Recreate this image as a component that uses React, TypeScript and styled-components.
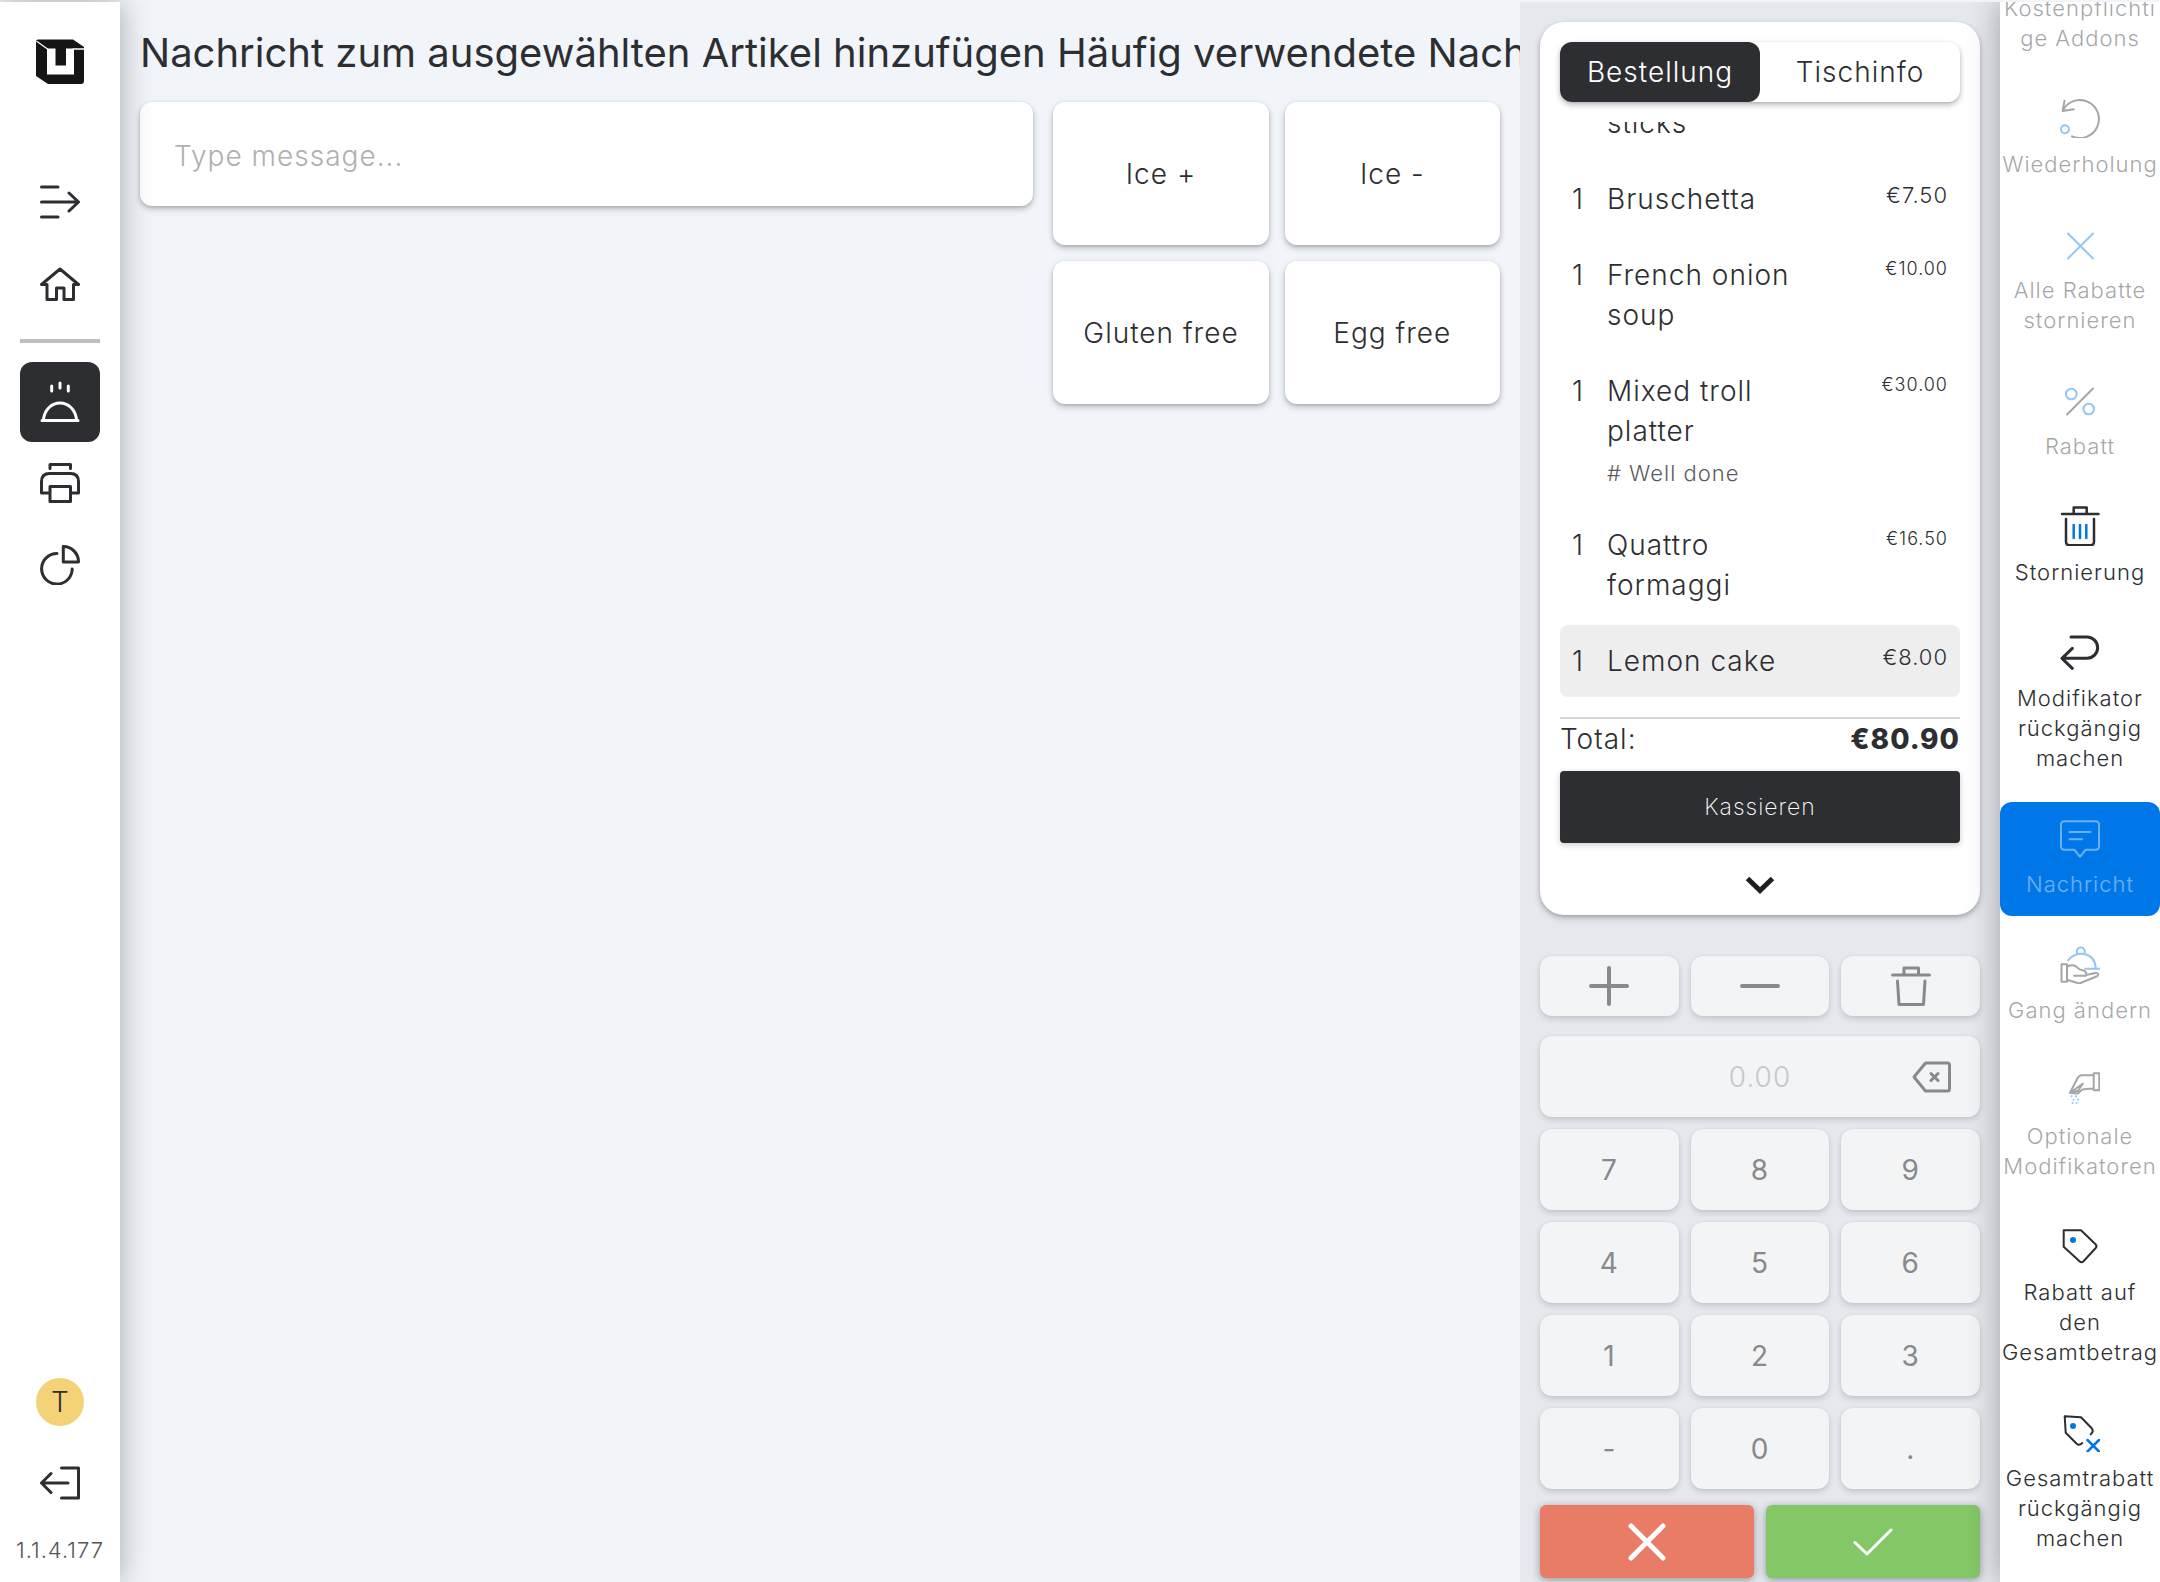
import React from "react";
import styled, { createGlobalStyle, css } from "styled-components";

const ink = "#2d2e32";
const blue = "#0077e8";
const lift = "0 3px 6px rgba(0, 0, 0, 0.24), 0 1px 3px rgba(0, 0, 0, 0.12)";
const edge = "0 0 30px rgba(0, 0, 0, 0.32)";

const GlobalStyle = createGlobalStyle`
  *, *::before, *::after { box-sizing: border-box; }
  body {
    margin: 0;
    background: #f1f5fa;
    color: ${ink};
    font-family: Inter, "Liberation Sans", sans-serif;
    font-size: 28px;
    font-weight: 300;
    letter-spacing: 1px;
    line-height: 40px;
  }
  button, input {
    font: inherit;
    color: inherit;
    letter-spacing: inherit;
    border: 0;
    margin: 0;
    padding: 0;
    background: none;
  }
  button { cursor: pointer; }
  h1, p, ul { margin: 0; padding: 0; }
  svg { display: block; flex: none; fill: none; stroke: currentColor; stroke-linecap: round; stroke-linejoin: round; }
`;

const Screen = styled.div`
  display: grid;
  grid-template-columns: 120px minmax(0, 1fr) 480px 160px;
  height: 100vh;
  padding-top: 2px;
  overflow: hidden;
`;

/* ---------- left navigation ---------- */

const Sidebar = styled.nav`
  z-index: 2;
  display: flex;
  flex-direction: column;
  align-items: center;
  padding: 37px 20px 16px;
  background: #fff;
  box-shadow: ${edge};
`;

const Brand = styled.div`
  margin-bottom: 76px;
`;

const NavButton = styled.button<{ $active?: boolean }>`
  display: flex;
  align-items: center;
  justify-content: center;
  width: 80px;
  height: ${(p) => (p.$active ? 80 : 82)}px;
  border-radius: 12px;
  color: ${(p) => (p.$active ? "#fff" : ink)};
  background: ${(p) => (p.$active ? ink : "transparent")};
`;

const NavDivider = styled.hr`
  width: 100%;
  height: 4px;
  margin: 14px 0 19px;
  border: 0;
  background: #bfbfbf;
`;

const NavFoot = styled.div`
  display: flex;
  flex-direction: column;
  align-items: center;
  margin-top: auto;
`;

const Avatar = styled.span`
  display: flex;
  align-items: center;
  justify-content: center;
  width: 48px;
  height: 48px;
  margin-bottom: 16px;
  border-radius: 50%;
  background: #f4d277;
  letter-spacing: 0;
`;

const Version = styled.span`
  margin-top: 10px;
  color: #555;
  font-size: 22px;
  line-height: 32px;
`;

/* ---------- message area ---------- */

const Main = styled.main`
  min-width: 0;
  padding: 27px 0 0 20px;
  overflow: hidden;
`;

const Title = styled.h1`
  overflow: hidden;
  font-size: 40px;
  font-weight: 400;
  line-height: 48px;
  letter-spacing: 0;
  white-space: nowrap;
`;

const MessageGrid = styled.div`
  display: grid;
  grid-template-columns: 2fr 1fr;
  align-items: start;
  gap: 20px;
  padding: 25px 20px 0 0;
`;

const MessageInput = styled.input`
  width: 100%;
  height: 104px;
  padding: 4px 34px 0;
  border-radius: 12px;
  background: #fff;
  box-shadow: ${lift};
  outline: 0;
  &::placeholder { color: #b0b0b0; opacity: 1; }
`;

const QuickGrid = styled.div`
  display: grid;
  grid-template-columns: 1fr 1fr;
  gap: 16px;
`;

const QuickButton = styled.button`
  height: 143px;
  border-radius: 12px;
  background: #fff;
  box-shadow: ${lift};
`;

/* ---------- order column ---------- */

const OrderColumn = styled.section`
  display: flex;
  flex-direction: column;
  min-height: 0;
  padding: 20px 20px 4px;
  background: #e5e8ed;
`;

const OrderCard = styled.div`
  display: flex;
  flex: 1;
  flex-direction: column;
  min-height: 0;
  margin-bottom: 41px;
  padding: 20px 20px 0;
  border-radius: 24px;
  background: #fff;
  box-shadow: ${lift};
`;

const Tabs = styled.div`
  display: grid;
  grid-template-columns: 1fr 1fr;
  flex: none;
  height: 60px;
  margin-bottom: 20px;
  border-radius: 12px;
  background: #fff;
  box-shadow: ${lift};
`;

const Tab = styled.button<{ $active?: boolean }>`
  border-radius: 12px;
  color: ${(p) => (p.$active ? "#fff" : ink)};
  background: ${(p) => (p.$active ? ink : "transparent")};
`;

const OrderList = styled.ul`
  display: flex;
  flex: 1;
  flex-direction: column;
  justify-content: flex-end;
  gap: 4px;
  min-height: 0;
  margin-bottom: 20px;
  overflow: hidden;
  list-style: none;
`;

const OrderRow = styled.li<{ $selected?: boolean }>`
  display: grid;
  grid-template-columns: 35px 200px 1fr;
  flex: none;
  padding: 16px 12px;
  border-radius: 8px;
  background: ${(p) => (p.$selected ? "#eeeeee" : "transparent")};
`;

const ItemName = styled.span`
  grid-column: 2;
`;

const Price = styled.span<{ $small?: boolean }>`
  padding-top: 3px;
  font-size: ${(p) => (p.$small ? 18 : 22)}px;
  line-height: ${(p) => (p.$small ? 22 : 26)}px;
  text-align: right;
`;

const Note = styled.span`
  grid-column: 2 / -1;
  margin-top: 6px;
  color: #5c5c5e;
  font-size: 22px;
  line-height: 32px;
`;

const TotalRow = styled.p`
  display: flex;
  justify-content: space-between;
  margin-bottom: 12px;
  border-top: 2px solid #d8d8d8;
  strong { font-weight: 800; }
`;

const PayButton = styled.button`
  flex: none;
  height: 72px;
  border-radius: 4px;
  color: #fff;
  background: ${ink};
  box-shadow: 0 2px 6px rgba(0, 0, 0, 0.2);
  font-size: 23px;
  font-weight: 200;
`;

const CollapseButton = styled.button`
  display: flex;
  flex: none;
  align-items: center;
  justify-content: center;
  height: 84px;
  margin-bottom: -12px;
`;

/* ---------- keypad ---------- */

const softKey = css`
  display: flex;
  align-items: center;
  justify-content: center;
  border-radius: 12px;
  color: #88898b;
  background: #f2f4f6;
  box-shadow: 0 3px 6px rgba(0, 0, 0, 0.14), 0 0 3px rgba(0, 0, 0, 0.06);
`;

const KeyGrid = styled.div`
  display: grid;
  grid-template-columns: repeat(3, 1fr);
  gap: 12px;
`;

const ToolKey = styled.button`
  ${softKey}
  height: 60px;
`;

const DigitKey = styled.button`
  ${softKey}
  height: 81px;
  font-weight: 400;
`;

const AmountBox = styled.div`
  ${softKey}
  display: grid;
  grid-template-columns: 68px 1fr 68px;
  height: 81px;
  margin: 20px 0 12px;
`;

const AmountInput = styled.input`
  grid-column: 2;
  width: 100%;
  text-align: center;
  &::placeholder { color: #c6c8cb; opacity: 1; }
`;

const ConfirmRow = styled.div`
  display: grid;
  grid-template-columns: 1fr 1fr;
  gap: 12px;
  margin-top: 16px;
`;

const ConfirmButton = styled.button<{ $tone: string }>`
  display: flex;
  align-items: center;
  justify-content: center;
  height: 73px;
  border-radius: 6px;
  color: #fff;
  background: ${(p) => p.$tone};
  box-shadow: 0 2px 8px rgba(0, 0, 0, 0.36);
`;

/* ---------- action rail ---------- */

const Rail = styled.aside`
  z-index: 1;
  display: flex;
  flex-direction: column;
  justify-content: flex-end;
  gap: 12px;
  min-height: 0;
  padding-bottom: 12px;
  background: #fff;
  box-shadow: ${edge};
  clip-path: inset(0 0 0 -40px);
`;

const RailButton = styled.button<{ $state?: "off" | "active" }>`
  display: flex;
  flex: none;
  flex-direction: column;
  align-items: center;
  gap: 11px;
  padding: 16px 0 17px;
  border-radius: 12px;
  font-size: 22px;
  line-height: 30px;
  background: ${(p) => (p.$state === "active" ? blue : "transparent")};
  color: ${(p) => (p.$state === "active" ? "#fff" : ink)};
  > * { opacity: ${(p) => (p.$state ? 0.42 : 1)}; }
  > span { width: 100%; overflow-wrap: anywhere; }
`;

const icons = {
  none: null,
  repeat: (
    <>
      <path d="M2.7 13A19 19 0 1 1 12 38.3M4.5 2.7L2.7 13l11-1.7" />
      <circle cx="5" cy="31.3" r="4" stroke={blue} />
    </>
  ),
  cross: <path d="M8 9.5l25 25M33 9.5l-25 25" stroke={blue} />,
  percent: (
    <>
      <path d="M33 8.5l-26 26" />
      <circle cx="11.3" cy="14" r="5.3" stroke={blue} />
      <circle cx="28.7" cy="29" r="5.3" stroke={blue} />
    </>
  ),
  trash: (
    <>
      <path d="M2 8h36.5M13.7 8V1.5h13V8M6 13v23q0 3.3 3.3 3.3h21.4q3.300 0 3.300-3.300V13" strokeWidth="2.5" />
      <path d="M13.7 19v13M20 19v13M26.3 19v13" stroke={blue} strokeWidth="2.5" />
    </>
  ),
  undo: <path d="M11 5h16a10.650 10.650 0 0 1 0 21.300H2.500M12.300 16.300L2 26.300l10.300 10" strokeWidth="3" />,
  message: (
    <path d="M4.500 3.300h31q3.500 0 3.500 3.500v21.400q0 3.500-3.500 3.500h-9.800L20 38.800l-5.700-7.100H4.500Q1 31.700 1 28.200V6.800q0-3.500 3.500-3.500zM9.500 14h21M9.500 21.300h12.500" />
  ),
  course: (
    <>
      <path d="M8 16.300C15 6.500 34.500 7 35.700 24M25.300 24.700H39.500M17.300 9.500a4 4 0 1 1 7 0" stroke={blue} />
      <path d="M1.500 20.300H7v17.400H1.500zM7 22.500c4-1.800 8-1.500 10 .8 2 2.300 3.500 2.900 6.500 3.200 2.500.5 3 3 2.500 5.300H14M26 31l9.500-2c3-.5 3.500 2 1.500 3.300L20.500 39Q18 39.500 16 38.500L7 35.800" />
    </>
  ),
  pinch: (
    <>
      <path d="M33.700 3.300h5.600v17h-5.600zM33.700 5.200H22q-3 0-4.500 3L10 22.800l6 .7q2 .2 3.500-1.500l2.500-2.300q4-.7 11.700-1.200M10.500 22.500l6-1.500M10 22.800L22.700 13.700l-5 7.500" />
      <path d="M11.500 26.300h.1M16 26.300h.1M13.500 29.700h.1M18 29.700h.1M12.500 33h.1M16.500 33h.1" stroke={blue} />
    </>
  ),
  tag: (
    <>
      <path d="M3.700 4.300H21l14.500 13.900q2 2 0 4L23.500 35.300q-2 2-4 0L3.700 20.700z" />
      <circle cx="13" cy="14" r="3" fill={blue} stroke="none" />
    </>
  ),
  tagOff: (
    <>
      <path d="M30.700 22.300q3.500-3 1-6L21 5.300l-16.300-1 1 16.400 11 11q2.500 2.300 5.600-.7" />
      <circle cx="13" cy="14" r="3" fill={blue} stroke="none" />
      <path d="M27.500 28l11.500 11.500M39 28L27.500 39.500" stroke={blue} strokeWidth="2.5" />
    </>
  ),
};

type RailItem = { label: string; icon: keyof typeof icons; state?: "off" | "active" };

const railItems: RailItem[] = [
  { label: "Kostenpflichtige Addons", icon: "none", state: "off" },
  { label: "Wiederholung", icon: "repeat", state: "off" },
  { label: "Alle Rabatte stornieren", icon: "cross", state: "off" },
  { label: "Rabatt", icon: "percent", state: "off" },
  { label: "Stornierung", icon: "trash" },
  { label: "Modifikator rückgängig machen", icon: "undo" },
  { label: "Nachricht", icon: "message", state: "active" },
  { label: "Gang ändern", icon: "course", state: "off" },
  { label: "Optionale Modifikatoren", icon: "pinch", state: "off" },
  { label: "Rabatt auf den Gesamtbetrag", icon: "tag" },
  { label: "Gesamtrabatt rückgängig machen", icon: "tagOff" },
];

type Item = { qty?: string; name: string; price?: string; note?: string; selected?: boolean };

const items: Item[] = [
  { name: "sticks" },
  { qty: "1", name: "Bruschetta", price: "€7.50" },
  { qty: "1", name: "French onion soup", price: "€10.00" },
  { qty: "1", name: "Mixed troll platter", price: "€30.00", note: "# Well done" },
  { qty: "1", name: "Quattro formaggi", price: "€16.50" },
  { qty: "1", name: "Lemon cake", price: "€8.00", selected: true },
];

const quickMessages = ["Ice +", "Ice -", "Gluten free", "Egg free"];
const keys = ["7", "8", "9", "4", "5", "6", "1", "2", "3", "-", "0", "."];

const Glyph = ({ w = 40, h = 40, sw = 3, d }: { w?: number; h?: number; sw?: number; d: string }) => (
  <svg width={w} height={h} viewBox={`0 0 ${w} ${h}`} strokeWidth={sw} aria-hidden="true">
    <path d={d} />
  </svg>
);

const Logo = () => (
  <svg width="48" height="46" viewBox="0 0 48 46" aria-label="Logo" role="img">
    <path d="M2 0.500H37L48 8V42q0 3-3 3H12L0 37V2.500Q0 .5 2 .5z" fill="#151515" stroke="none" />
    <path d="M11 9.500h8.500v17h10.500v-17h8v26H11z" fill="#fff" stroke="none" />
    <path d="M1 2.500l10.500 7.500M37 10h11" stroke="#fff" strokeWidth="1.3" />
  </svg>
);

export default function App() {
  return (
    <Screen>
      <GlobalStyle />
      <Sidebar>
        <Brand>
          <Logo />
        </Brand>
        <NavButton aria-label="Menü öffnen">
          <Glyph h={34} d="M1.500 2H18M1.500 17H38M1.500 32H18M29 8l9.500 9L29 26" />
        </NavButton>
        <NavButton aria-label="Start">
          <Glyph h={34} d="M1.500 17.500L20 2l18.500 15.500H33.500v15H24V21h-7.500v11.500H7v-15z" />
        </NavButton>
        <NavDivider />
        <NavButton $active aria-label="Bestellungen">
          <Glyph h={42} d="M11.700 5v5M20 2v5M28.300 5v5M3.500 38C5 28 12 22 20 22s15 6 16.500 16M2 39.500h36" />
        </NavButton>
        <NavButton aria-label="Drucken">
          <Glyph d="M10 5.500V1.500h20.500v4M9.500 30h-8V18.500q0-8 8-8h21q8 0 8 8V30h-8M10 23.500h20.500v15H10z" />
        </NavButton>
        <NavButton aria-label="Berichte">
          <Glyph d="M17 8.500A15.300 15.300 0 1 0 32.200 24M23.300 1.500V17h15.200A15.300 15.300 0 0 0 23.300 1.500z" />
        </NavButton>
        <NavFoot>
          <Avatar>T</Avatar>
          <NavButton aria-label="Abmelden">
            <Glyph h={34} d="M21.500 2H38.500v30h-17M28 17H2M11 7.500L1.500 17l9.500 9.500" />
          </NavButton>
          <Version>1.1.4.177</Version>
        </NavFoot>
      </Sidebar>

      <Main>
        <Title>Nachricht zum ausgewählten Artikel hinzufügen Häufig verwendete Nachrichten</Title>
        <MessageGrid>
          <MessageInput aria-label="Nachricht" placeholder="Type message..." />
          <QuickGrid>
            {quickMessages.map((m) => (
              <QuickButton key={m}>{m}</QuickButton>
            ))}
          </QuickGrid>
        </MessageGrid>
      </Main>

      <OrderColumn>
        <OrderCard>
          <Tabs>
            <Tab $active>Bestellung</Tab>
            <Tab>Tischinfo</Tab>
          </Tabs>
          <OrderList>
            {items.map((it) => (
              <OrderRow key={it.name} $selected={it.selected}>
                {it.qty && <span>{it.qty}</span>}
                <ItemName>{it.name}</ItemName>
                {it.price && <Price $small={it.price.length > 5}>{it.price}</Price>}
                {it.note && <Note>{it.note}</Note>}
              </OrderRow>
            ))}
          </OrderList>
          <TotalRow>
            <span>Total:</span>
            <strong>€80.90</strong>
          </TotalRow>
          <PayButton>Kassieren</PayButton>
          <CollapseButton aria-label="Einklappen">
            <svg width="30" height="18" viewBox="0 0 30 18" strokeWidth="5" aria-hidden="true">
              <path d="M2.500 2.500L15 14.500l12.500-12" stroke="#1f1f1f" strokeLinecap="butt" strokeLinejoin="miter" />
            </svg>
          </CollapseButton>
        </OrderCard>

        <KeyGrid>
          <ToolKey aria-label="Mehr">
            <Glyph sw={4} d="M2 20h36M20 2v36" />
          </ToolKey>
          <ToolKey aria-label="Weniger">
            <Glyph sw={4} d="M2 20h36" />
          </ToolKey>
          <ToolKey aria-label="Löschen">
            <Glyph sw={3} d="M1.500 9h37M13 9V2h14.500v7M6.500 15l1.500 23.500h24.500L34 15" />
          </ToolKey>
        </KeyGrid>
        <AmountBox>
          <AmountInput aria-label="Betrag" placeholder="0.00" />
          <button aria-label="Rücktaste">
            <Glyph h={32} d="M13.500 2H35.500q2 0 2 2V28q0 2-2 2H13.500L2 16zM19 12.500l7 7M26 12.500l-7 7" />
          </button>
        </AmountBox>
        <KeyGrid>
          {keys.map((k) => (
            <DigitKey key={k}>{k}</DigitKey>
          ))}
        </KeyGrid>
        <ConfirmRow>
          <ConfirmButton $tone="#e87c66" aria-label="Abbrechen">
            <Glyph sw={5} d="M4 4l32 32M36 4L4 36" />
          </ConfirmButton>
          <ConfirmButton $tone="#84c766" aria-label="Bestätigen">
            <Glyph h={28} d="M2 14.500L14 26 38 2" />
          </ConfirmButton>
        </ConfirmRow>
      </OrderColumn>

      <Rail>
        {railItems.map((r) => (
          <RailButton key={r.label} $state={r.state}>
            <svg width="40" height="40" viewBox="0 0 40 40" strokeWidth="2" aria-hidden="true">
              {icons[r.icon]}
            </svg>
            <span>{r.label}</span>
          </RailButton>
        ))}
      </Rail>
    </Screen>
  );
}
